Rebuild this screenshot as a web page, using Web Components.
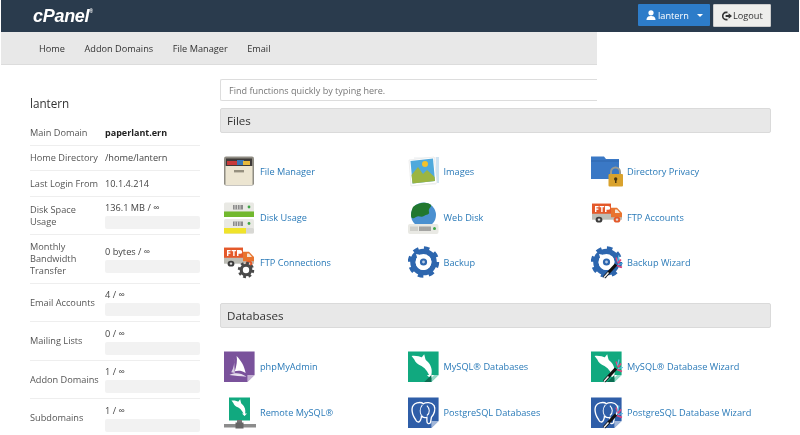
<!DOCTYPE html>
<html>
<head>
<meta charset="utf-8">
<title>cPanel</title>
<style>
  html, body { margin: 0; padding: 0; background: #fff; overflow: hidden; }
  body { font-family: "Open Sans", "Liberation Sans", sans-serif; width: 800px; height: 435px; filter: blur(.3px); }
</style>
</head>
<body>
<cp-header user="lantern"></cp-header>
<cp-nav>
  <a>Home</a><a>Addon Domains</a><a>File Manager</a><a>Email</a>
</cp-nav>
<cp-layout>
  <cp-stats slot="side" title="lantern">
    <stat-row label="Main Domain" h="25"><b>paperlant.ern</b></stat-row>
    <stat-row label="Home Directory" h="25">/home/lantern</stat-row>
    <stat-row label="Last Login From" h="26">10.1.4.214</stat-row>
    <stat-row label="Disk Space Usage" h="38" bar>136.1 MB / ∞</stat-row>
    <stat-row label="Monthly Bandwidth Transfer" h="49" bar>0 bytes / ∞</stat-row>
    <stat-row label="Email Accounts" h="38" bar>4 / ∞</stat-row>
    <stat-row label="Mailing Lists" h="39" bar>0 / ∞</stat-row>
    <stat-row label="Addon Domains" h="38" bar>1 / ∞</stat-row>
    <stat-row label="Subdomains" h="38" bar last>1 / ∞</stat-row>
  </cp-stats>
  <cp-search placeholder="Find functions quickly by typing here."></cp-search>
  <cp-section heading="Files">
    <cp-tool icon="filemanager" label="File Manager"></cp-tool>
    <cp-tool icon="images" label="Images"></cp-tool>
    <cp-tool icon="privacy" label="Directory Privacy"></cp-tool>
    <cp-tool icon="disk" label="Disk Usage"></cp-tool>
    <cp-tool icon="webdisk" label="Web Disk"></cp-tool>
    <cp-tool icon="ftp" label="FTP Accounts"></cp-tool>
    <cp-tool icon="ftpconn" label="FTP Connections"></cp-tool>
    <cp-tool icon="backup" label="Backup"></cp-tool>
    <cp-tool icon="backupwiz" label="Backup Wizard"></cp-tool>
  </cp-section>
  <cp-section heading="Databases">
    <cp-tool icon="phpmyadmin" label="phpMyAdmin"></cp-tool>
    <cp-tool icon="mysql" label="MySQL® Databases"></cp-tool>
    <cp-tool icon="mysqlwiz" label="MySQL® Database Wizard"></cp-tool>
    <cp-tool icon="remote" label="Remote MySQL®"></cp-tool>
    <cp-tool icon="pg" label="PostgreSQL Databases"></cp-tool>
    <cp-tool icon="pgwiz" label="PostgreSQL Database Wizard"></cp-tool>
  </cp-section>
</cp-layout>

<script>
// icon parts, all in a 34x34 box
const wand = `
  <g transform="translate(1 -1.5)">
  <path d="M12 33 L24 20" stroke="#111" stroke-width="3.2"/>
  <path d="M12 33 L16.5 28" stroke="#eee" stroke-width="1.5"/>
  <path d="M24 13 l2 5 M29 15 l-3 4 M30 23 l-5 -2" stroke="#e0457b" stroke-width="1.5"/>
  <path d="M27 11 l-1.5 6 M31 19 l-5 1" stroke="#5fc3e8" stroke-width="1.2"/>
  </g>`;

const truck = `
  <path d="M1 3 h19 v13 h-19 z" fill="#e4592a"/>
  <rect x="1" y="15" width="30" height="7" fill="#bdbdb5"/>
  <path d="M20 8 h6 l5 6 v5 h-11 z" fill="#e8742f"/>
  <path d="M24 10 h2 l3 4 h-5 z" fill="#f5e6d5"/>
  <circle cx="8" cy="22" r="3.4" fill="#3c3c3c"/><circle cx="8" cy="22" r="1.3" fill="#ddd"/>
  <circle cx="26" cy="22" r="3.4" fill="#e4592a"/><circle cx="26" cy="22" r="1.3" fill="#ddd"/>
  <path d="M4 6 h3.6 v1.4 h-2.2 v1.4 h2 v1.4 h-2 v2.8 h-1.4 z M8.6 6 h4.6 v1.4 h-1.6 v5.6 h-1.4 v-5.6 h-1.6 z M14 6 h3 a2 2 0 0 1 0 4.4 h-1.5 v2.6 h-1.5 z" fill="#fff"/>`;

const gear = `
  <g transform="translate(-1.5 -1)">
  <circle cx="17" cy="17" r="13.2" fill="none" stroke="#2d66ae" stroke-width="5" stroke-dasharray="5.2 5.17"/>
  <circle cx="17" cy="17" r="10.6" fill="none" stroke="#2d66ae" stroke-width="5.4"/>
  <circle cx="17" cy="17" r="7" fill="none" stroke="#fff" stroke-width="2" stroke-dasharray="36 8" transform="rotate(-50 17 17)"/>
  <path d="M9.5 9 l5 1 l-3.6 3.6 z" fill="#fff"/>
  <circle cx="17" cy="17" r="3.6" fill="#2d66ae"/><circle cx="17" cy="17" r="1.4" fill="#b9cde6"/>
  </g>`;

const dolphin = `
  <path d="M4 5 C12 4 20 8 24 14 C27 19 27 24 25 30 C23 24 20 19 15 16 C11 15 8 12 7 9 z" fill="#fff"/>
  <path d="M14 8 L18 3 L20 11 z" fill="#fff"/>
  <path d="M25 30 L21 26 L29 26 z" fill="#fff"/>`;

const elephant = `
  <path d="M8 24 C3 16 3 8 10 6 C14 5 16 6 17 7 C20 5 26 5 29 9 C31 13 29 19 26 22 L25 28 C23 30 21 29 21 26 L21 22 C18 23 16 22 15 20 C15 24 13 28 11 27 C9 27 9 25 8 24 z" fill="none" stroke="#fff" stroke-width="1.5"/>
  <path d="M16 8 C13 12 13 17 15 20 M21 9 C24 12 25 17 21 20" fill="none" stroke="#fff" stroke-width="1.2"/>`;

// square tiles with a turned corner: 30 wide, sitting at the left of the box
const tile = (c, inner) => `<g transform="translate(0 1.5) scale(.9)">
  <path d="M34 26 L26 34 H0 V0 H34 z" fill="${c}"/><path d="M34 26 L26 26 V34 z" fill="#fff" opacity=".55"/>${inner}</g>`;
const tail = `<path d="M18 34 L26 26 L26 34 z" fill="#0b6e53"/>`;

const diskUnit = (y, bar, w) => `
  <rect x="0" y="${y}" width="30" height="14.5" rx="1.5" fill="#e9e9e4"/>
  <rect x="0" y="${y + 9}" width="30" height="5.5" rx="1.5" fill="#d8d8d4"/>
  <rect x="0" y="${y + 9}" width="${w}" height="5.5" fill="${bar}"/>
  <path d="M9 ${y + 2.5} h10 v4.5 h-10 z" fill="#8b8b8b"/>
  <path d="M11 ${y + 2.5} v4.5 M13.5 ${y + 2.5} v4.5 M16 ${y + 2.5} v4.5" stroke="#e9e9e4" stroke-width=".8"/>
  <circle cx="25" cy="${y + 4.5}" r="1.4" fill="#3fa648"/>`;

const ICONS = {
  filemanager: `
    <rect x="0" y="1.5" width="30" height="29" rx="2" fill="#8f8c83"/>
    <rect x="2" y="3.5" width="26" height="8" fill="#3e3a38"/>
    <path d="M3 6 h12 v4 h-12 z" fill="#c83a3a"/><path d="M13 5 h7 v5 h-7 z" fill="#3a77b6"/><path d="M19 6 h7 v4 h-7 z" fill="#e8b93c"/>
    <rect x="1.5" y="11" width="27" height="19" fill="#ece5d1"/>
    <rect x="10" y="15" width="10" height="2.4" fill="#96907f"/>`,
  images: `
    <path d="M10 2 H31 V28 H10 z" fill="#cfe3f2"/><path d="M6 2 H28 V30 H6 z" fill="#f4f6f7"/>
    <path d="M1 5 L26 2 L29 28 L3 31 z" fill="#fff" stroke="#e3e3e3" stroke-width=".6"/>
    <path d="M2.5 6 L25 3.5 L27 26 L4.5 28.5 z" fill="#4fa9dc"/>
    <path d="M3.5 20 L10 12 L15 19 L19 15 L26.6 22 L27 26 L4.5 28.5 z" fill="#9bb541"/>
    <circle cx="17" cy="9" r="3" fill="#f3c22c"/>`,
  privacy: `
    <path d="M0 4 V1.5 H13 L15 4 H28 V24 H0 z" fill="#3a78c5"/>
    <path d="M0 6 H28" stroke="#2f67ad" stroke-width="1"/>
    <path d="M20 19 V17 a4.5 4.5 0 0 1 9 0 V19" fill="none" stroke="#9a9a90" stroke-width="2"/>
    <rect x="17.5" y="19" width="14.5" height="12.5" rx="1" fill="#d9a22d"/>
    <circle cx="24.7" cy="24" r="1.7" fill="#4a3710"/><rect x="24" y="24" width="1.5" height="4" fill="#4a3710"/>`,
  disk: diskUnit(1.5, "#72b82e", 30) + diskUnit(18, "#f0e32a", 22),
  webdisk: `
    <circle cx="15.5" cy="14" r="12.5" fill="#4a90d0"/>
    <path d="M5 6 C9 2 19 0 23 4 C24 6 20 7 21 11 C22 14 18 13 16 15 C13 17 11 14 8 16 C5 18 3 18 3 14 C3 11 4 8 5 6 z" fill="#21772f"/>
    <rect x="0" y="23" width="30.5" height="10" rx="2" fill="#e9e9e4"/>
    <rect x="2" y="25.5" width="8" height="4.5" fill="#cfcfca"/>
    <path d="M12 25.5 v4.5 M14 25.5 v4.5 M16 25.5 v4.5 M18 25.5 v4.5 M20 25.5 v4.5 M22 25.5 v4.5" stroke="#777" stroke-width="1.2"/>
    <circle cx="26.5" cy="27.5" r="1.5" fill="#3fa648"/>`,
  ftp: `<g transform="scale(1 .85)">${truck}</g>`,
  ftpconn: `
    <g transform="translate(-1 -1) scale(1 .85)">${truck}</g>
    <g transform="translate(13 15) scale(.53)">
      <circle cx="17" cy="17" r="12.5" fill="none" stroke="#4a4a4a" stroke-width="6" stroke-dasharray="5 4.82"/>
      <circle cx="17" cy="17" r="9" fill="none" stroke="#4a4a4a" stroke-width="6"/>
    </g>`,
  backup: gear,
  backupwiz: gear + wand,
  phpmyadmin: tile("#7a529b", `
    <path d="M14 5 C19 10 23 17 24 24 C20 21 15 21 12 22 C14 16 15 10 14 5 z" fill="#fff"/>
    <path d="M11 7 C12 12 11 18 8 23 L12 24 z" fill="#d9cde4"/>
    <path d="M6 26 C12 23 19 24 25 28 C18 27 12 27 6 26 z" fill="#e8e0ee"/>`),
  mysql: tile("#11a97f", dolphin + tail),
  mysqlwiz: tile("#11a97f", dolphin + tail) + wand,
  remote: `
    <rect x="5" y="1.5" width="21" height="23" fill="#11a97f"/>
    <g transform="translate(5 1.5) scale(.62)">${dolphin}</g>
    <rect x="13" y="24" width="5" height="5" fill="#777"/>
    <rect x="0" y="28" width="32" height="3.5" fill="#8c8c8c"/>
    <rect x="11.5" y="26.5" width="8" height="6" fill="#666"/>`,
  pg: tile("#2f5ea8", elephant),
  pgwiz: tile("#2f5ea8", elephant) + wand,
};

class CpHeader extends HTMLElement {
  constructor() {
    super();
    this.attachShadow({ mode: "open" });
    this.shadowRoot.innerHTML = `
      <style>
        :host { display: flex; align-items: flex-start; height: 32px; margin: 0 1px; background: #2a3b4d; box-sizing: border-box; padding: 4px 28px 0 32px; }
        .logo { font: italic bold 18px/24px "Liberation Sans", sans-serif; color: #fff; letter-spacing: -.3px; }
        .logo sup { font-size: 5px; vertical-align: 9px; line-height: 0; }
        .spacer { flex: 1; }
        .btn { display: flex; align-items: center; height: 22px; box-sizing: border-box; font-size: 9.2px; }
        .user { width: 72px; background: #2d7cc9; color: #fff; padding-left: 8px; border-radius: 1px; }
        .user svg { margin-right: 2px; }
        .caret { margin-left: auto; margin-right: 7px; border: 3px solid transparent; border-top-color: #fff; border-bottom: 0; }
        .logout { width: 58px; height: 23px; margin-left: 3px; background: #eeeeec; color: #333; border: 1px solid #ccc; border-radius: 1px; padding-left: 8px; }
        .logout svg { margin-right: 1px; }
      </style>
      <div class="logo">cPanel<sup>®</sup></div>
      <div class="spacer"></div>
      <div class="btn user">
        <svg width="10" height="10" viewBox="0 0 10 10"><circle cx="5" cy="2.8" r="2.6" fill="#fff"/><path d="M0.5 10 C.5 6.5 3 6 5 6 S9.5 6.5 9.5 10 z" fill="#fff"/></svg>
        ${this.getAttribute("user")}
        <span class="caret"></span>
      </div>
      <div class="btn logout">
        <svg width="10" height="10" viewBox="0 0 10 10"><path d="M5.5 1.4 H4 a3.3 3.6 0 0 0 0 7.2 H5.5" fill="none" stroke="#333" stroke-width="1.6"/><path d="M3.6 4 H6.6 V2.2 L10 5 L6.6 7.8 V6 H3.6 z" fill="#333"/></svg>
        Logout
      </div>`;
  }
}
customElements.define("cp-header", CpHeader);

class CpNav extends HTMLElement {
  constructor() {
    super();
    this.attachShadow({ mode: "open" });
    this.shadowRoot.innerHTML = `
      <style>
        :host { display: flex; align-items: center; gap: 19.5px; width: 596px; height: 33px; margin-left: 1px; box-sizing: border-box; padding-left: 38px; background: #e8e8e8; border-bottom: 1px solid #dcdcdc; font-size: 9.2px; color: #333; }
      </style>
      <slot></slot>`;
  }
}
customElements.define("cp-nav", CpNav);

class CpLayout extends HTMLElement {
  constructor() {
    super();
    this.attachShadow({ mode: "open" });
    this.shadowRoot.innerHTML = `
      <style>
        :host { display: grid; grid-template-columns: 170px 551px; column-gap: 20px; padding: 14px 0 0 30px; }
        .side { padding-top: 15px; }
      </style>
      <div class="side"><slot name="side"></slot></div>
      <div><slot></slot></div>`;
  }
}
customElements.define("cp-layout", CpLayout);

class CpStats extends HTMLElement {
  constructor() {
    super();
    this.attachShadow({ mode: "open" });
    this.shadowRoot.innerHTML = `
      <style>
        :host { display: block; color: #444; }
        h2 { margin: 0; height: 27px; font-size: 11.7px; line-height: 18px; font-weight: 400; color: #333; }
      </style>
      <h2>${this.getAttribute("title")}</h2>
      <slot></slot>`;
  }
}
customElements.define("cp-stats", CpStats);

class StatRow extends HTMLElement {
  constructor() {
    super();
    this.attachShadow({ mode: "open" });
    const bar = this.hasAttribute("bar");
    this.shadowRoot.innerHTML = `
      <style>
        :host { display: grid; grid-template-columns: 75px 95px; align-items: center; box-sizing: border-box; height: ${this.getAttribute("h")}px; font-size: 9.2px; line-height: 12px; color: #555; border-bottom: ${this.hasAttribute("last") ? "0" : "1px solid #eee"}; }
        .label { padding-right: 4px; }
        .val { color: #444; }
        ::slotted(b) { color: #222; font-size: 9px; }
        .bar { height: 13px; margin-top: 2px; background: #f2f2f2; border-radius: 2px; }
      </style>
      <div class="label">${this.getAttribute("label")}</div>
      <div class="val"><slot></slot>${bar ? '<div class="bar"></div>' : ""}</div>`;
  }
}
customElements.define("stat-row", StatRow);

class CpSearch extends HTMLElement {
  constructor() {
    super();
    this.attachShadow({ mode: "open" });
    this.shadowRoot.innerHTML = `
      <style>
        :host { display: flex; align-items: center; box-sizing: border-box; width: 377px; height: 22px; padding-left: 8px; border: 1px solid #ddd; border-right: 0; border-radius: 2px 0 0 2px; font-size: 9.05px; color: #777; }
      </style>
      ${this.getAttribute("placeholder")}`;
  }
}
customElements.define("cp-search", CpSearch);

class CpSection extends HTMLElement {
  constructor() {
    super();
    this.attachShadow({ mode: "open" });
    this.shadowRoot.innerHTML = `
      <style>
        :host { display: block; padding-top: 7px; }
        h3 { margin: 0; height: 25px; box-sizing: border-box; padding-left: 6px; font-size: 11.6px; font-weight: 400; line-height: 23px; color: #333; background: #e8e8e8; border: 1px solid #dadada; border-radius: 2px; }
        .grid { display: grid; grid-template-columns: 183.5px 183.5px 1fr; grid-auto-rows: 45.5px; padding: 16px 0 10.5px 4px; }
      </style>
      <h3>${this.getAttribute("heading")}</h3>
      <div class="grid"><slot></slot></div>`;
  }
}
customElements.define("cp-section", CpSection);

class CpTool extends HTMLElement {
  constructor() {
    super();
    this.attachShadow({ mode: "open" });
    this.shadowRoot.innerHTML = `
      <style>
        :host { display: flex; align-items: center; gap: 3px; font-size: 9.2px; color: #2a7ab8; white-space: nowrap; }
        svg { flex: none; }
      </style>
      <svg width="33" height="33" viewBox="0 0 33 33" fill="none">${ICONS[this.getAttribute("icon")]}</svg>
      <span>${this.getAttribute("label")}</span>`;
  }
}
customElements.define("cp-tool", CpTool);
</script>
</body>
</html>
